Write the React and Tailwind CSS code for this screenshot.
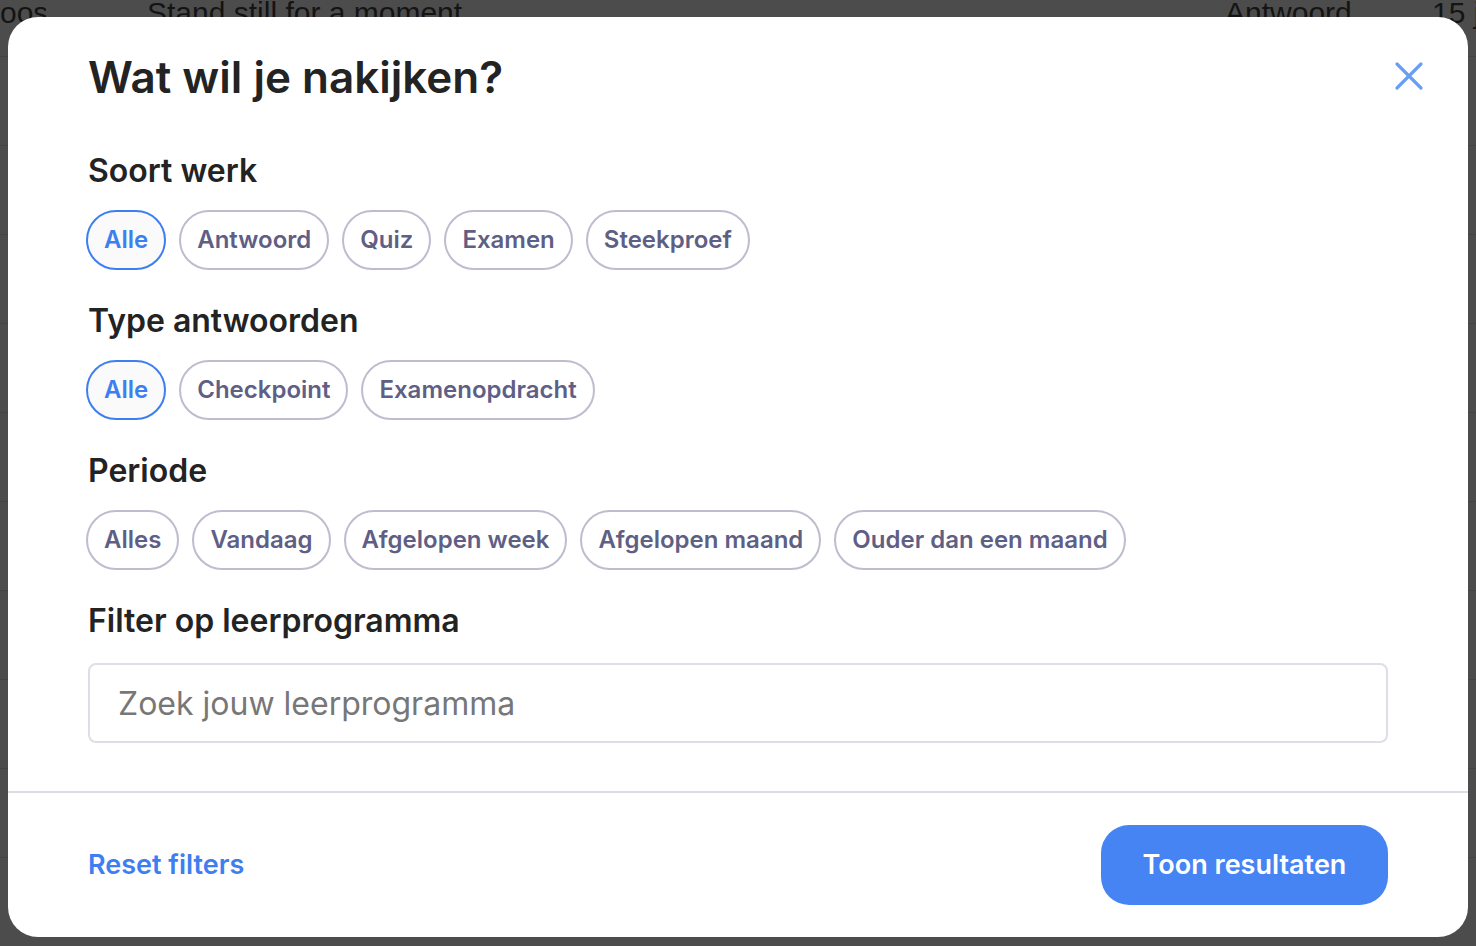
import React from "react";

const font = { fontFamily: "Inter, 'Noto Sans', sans-serif" };

function Chip({ label, active }) {
  return (
    <button
      className={
        active
          ? "h-[60px] rounded-full border-2 border-[#3d7ef0] bg-[#fafafa] px-[16px] text-[24px] font-semibold text-[#3d7ef0] leading-none"
          : "h-[60px] rounded-full border-2 border-[#bdbdcf] bg-white px-[16px] text-[24px] font-semibold text-[#5f5f86] leading-none"
      }
    >
      {label}
    </button>
  );
}

function Section({ title, chips, className }) {
  return (
    <div className={className}>
      <h2 className="text-[32px] leading-[36px] font-semibold text-[#232323]">{title}</h2>
      <div className="mt-[21px] -ml-[2px] flex gap-[13px]">
        {chips.map((c, i) => (
          <Chip key={c} label={c} active={c === "Alle" && i === 0} />
        ))}
      </div>
    </div>
  );
}

const rows = [
  { l: "oos", m: "Stand still for a moment", a: "Antwoord", r: "15 j" },
  { l: "c", m: "", a: "", r: "i" },
  ...Array.from({ length: 9 }, () => ({ l: "e", m: "", a: "", r: "u" })),
];

export default function App() {
  return (
    <div className="relative h-[946px] w-[1476px] overflow-hidden bg-[#4c4c4c]" style={font}>
      {/* background table under overlay */}
      <div className="absolute left-0 top-[-32px] w-[1476px]" style={{ fontFamily: "'Liberation Sans', Arial, sans-serif" }}>
        {rows.map((r, i) => (
          <div key={i} className="flex h-[89px] items-center border-b border-[#444444] text-[30px] text-[#141414] whitespace-nowrap">
            <div className="w-[46px] shrink-0 overflow-hidden text-right">{r.l}</div>
            <div className="ml-[101px] w-[1078px] shrink-0">{r.m}</div>
            <div className="w-[205px] shrink-0">{r.a}</div>
            <div className="shrink-0 pl-[2px]">{r.r}</div>
          </div>
        ))}
      </div>

      {/* modal */}
      <div className="absolute left-[8px] top-[17px] flex h-[920px] w-[1460px] flex-col rounded-[30px] bg-white">
        <button className="absolute right-[44px] top-[44px] flex h-[30px] w-[30px] items-center justify-center text-[#6a9ef5]">
          <svg width="30" height="30" viewBox="0 0 30 30" fill="none" stroke="currentColor" strokeWidth="3.2" strokeLinecap="round">
            <path d="M3 3 L27 27 M27 3 L3 27" />
          </svg>
        </button>

        <div className="flex-1 px-[80px] pt-[36px]">
          <h1 className="text-[44px] leading-[48px] font-semibold text-[#232323]">Wat wil je nakijken?</h1>

          <Section className="mt-[52px]" title="Soort werk" chips={["Alle", "Antwoord", "Quiz", "Examen", "Steekproef"]} />
          <Section className="mt-[33px]" title="Type antwoorden" chips={["Alle", "Checkpoint", "Examenopdracht"]} />
          <Section className="mt-[33px]" title="Periode" chips={["Alles", "Vandaag", "Afgelopen week", "Afgelopen maand", "Ouder dan een maand"]} />

          <div className="mt-[33px]">
            <h2 className="text-[32px] leading-[36px] font-semibold text-[#232323]">Filter op leerprogramma</h2>
            <input
              className="mt-[24px] h-[80px] w-full rounded-[8px] border-2 border-[#dedee8] px-[28px] text-[32px] text-[#333] placeholder:text-[#777777] outline-none"
              placeholder="Zoek jouw leerprogramma"
            />
          </div>
        </div>

        <div className="flex h-[146px] items-center justify-between border-t-2 border-[#dcdce4] px-[80px]">
          <button className="text-[27px] font-semibold text-[#3d7ef0]">Reset filters</button>
          <button className="h-[80px] w-[287px] rounded-[28px] bg-[#4684f4] text-[27px] font-semibold text-white">
            Toon resultaten
          </button>
        </div>
      </div>
    </div>
  );
}
